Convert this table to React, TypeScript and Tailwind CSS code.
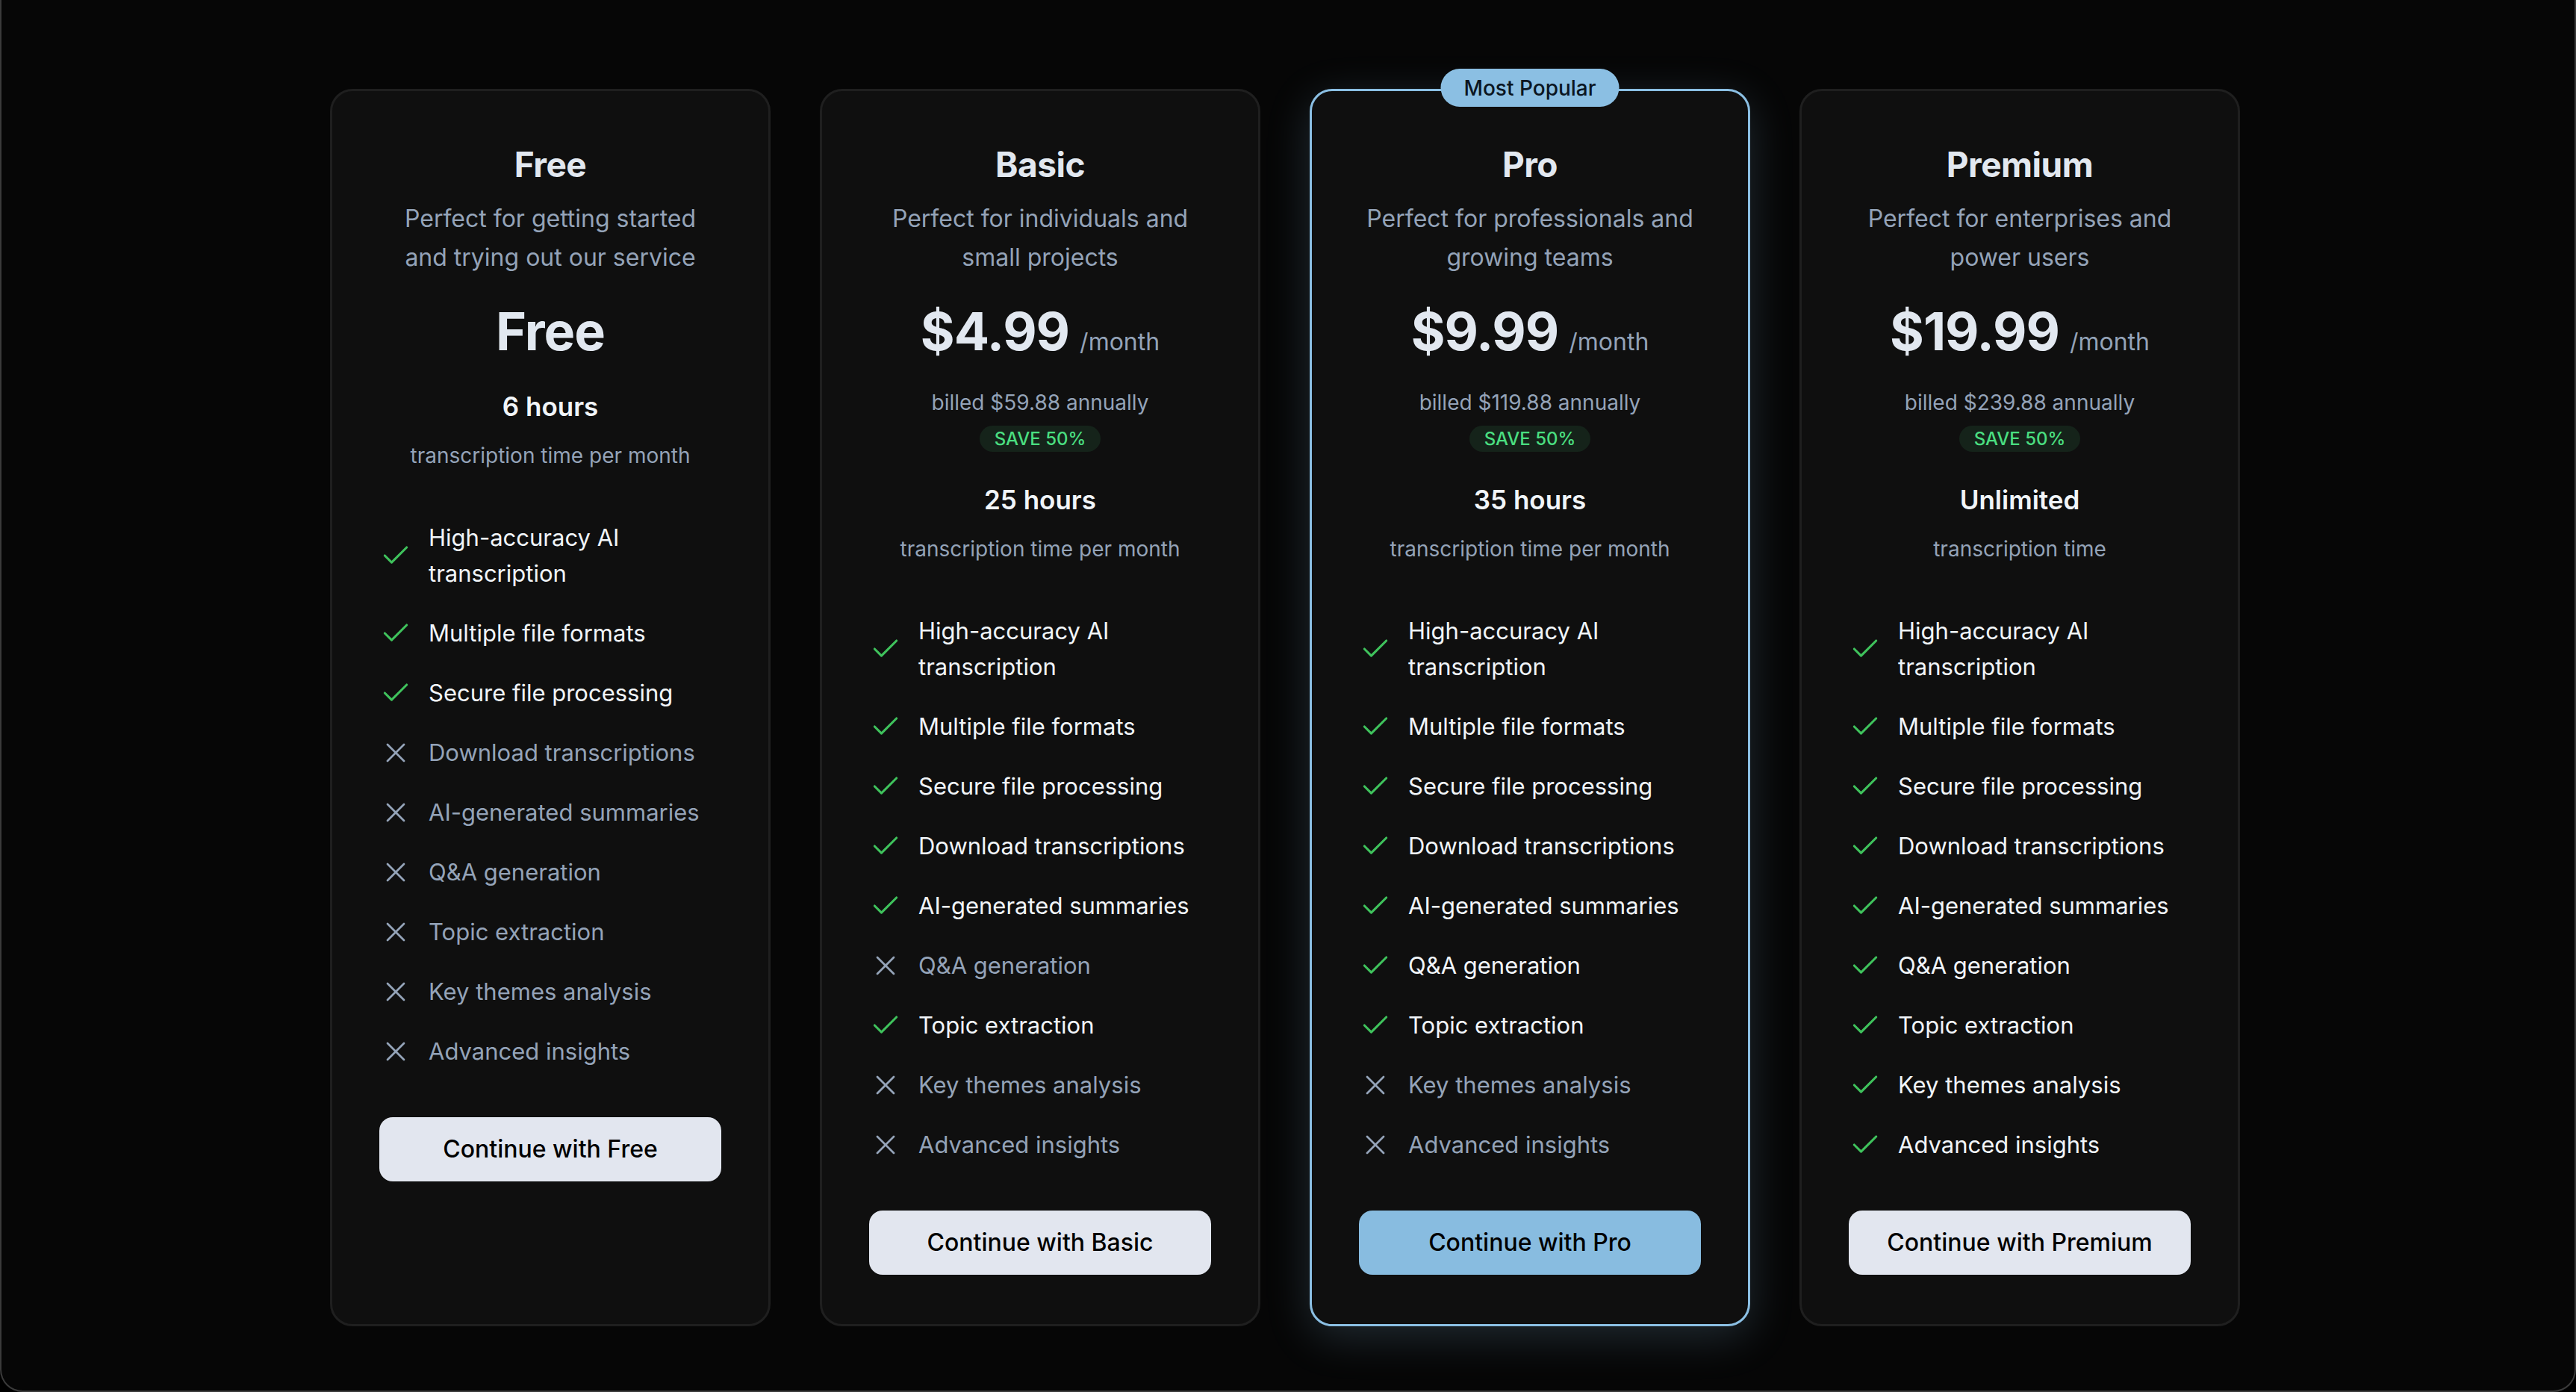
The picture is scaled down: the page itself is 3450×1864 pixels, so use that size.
import { Check, X } from 'lucide-react';

type Plan = {
  name: string;
  blurb: string;
  price: string;
  billed?: string;
  hours: string;
  hoursNote: string;
  popular?: boolean;
};

const features = [
  'High-accuracy AI transcription',
  'Multiple file formats',
  'Secure file processing',
  'Download transcriptions',
  'AI-generated summaries',
  'Q&A generation',
  'Topic extraction',
  'Key themes analysis',
  'Advanced insights',
];

// which features each plan has, in list order
const includedMap: Record<string, boolean[]> = {
  Free: [true, true, true, false, false, false, false, false, false],
  Basic: [true, true, true, true, true, false, true, false, false],
  Pro: [true, true, true, true, true, true, true, false, false],
  Premium: [true, true, true, true, true, true, true, true, true],
};

const plans: Plan[] = [
  { name: 'Free', blurb: 'Perfect for getting started and trying out our service', price: 'Free', hours: '6 hours', hoursNote: 'transcription time per month' },
  { name: 'Basic', blurb: 'Perfect for individuals and small projects', price: '$4.99', billed: 'billed $59.88 annually', hours: '25 hours', hoursNote: 'transcription time per month' },
  { name: 'Pro', blurb: 'Perfect for professionals and growing teams', price: '$9.99', billed: 'billed $119.88 annually', hours: '35 hours', hoursNote: 'transcription time per month', popular: true },
  { name: 'Premium', blurb: 'Perfect for enterprises and power users', price: '$19.99', billed: 'billed $239.88 annually', hours: 'Unlimited', hoursNote: 'transcription time' },
];

const PlanCard = ({ plan }: { plan: Plan }) => {
  const flags = includedMap[plan.name];
  return (
    <div
      className={
        plan.popular
          ? 'relative w-[590px] rounded-[30px] border-[3px] border-[#8bbfe3] bg-[#0f0f0f] px-[63px] pt-[70px] pb-[66px] shadow-[0_14px_60px_rgba(139,191,227,0.2)]'
          : 'relative w-[590px] rounded-[30px] border-[3px] border-[#1f1f1f] bg-[#0f0f0f] px-[63px] pt-[70px] pb-[66px]'
      }
    >
      {plan.popular && (
        <div className='absolute left-1/2 top-[-30px] flex h-[51px] w-[239px] -translate-x-1/2 items-center justify-center rounded-full bg-[#8bbfe3] text-[28px] font-medium text-[#0b1622]'>
          Most Popular
        </div>
      )}
      <div className='flex flex-col items-center text-center'>
        <h3 className='text-[46px] font-bold leading-[56px] tracking-[-0.5px] text-[#e2e8f0]'>{plan.name}</h3>
        <p className='mt-[19px] w-[442px] text-[32px] leading-[52px] text-[#94a3b8]'>{plan.blurb}</p>
        <div className='mt-[33px] flex items-baseline gap-[14px]'>
          <span className='text-[70px] font-bold leading-[80px] tracking-[-1px] text-[#e2e8f0]'>{plan.price}</span>
          {plan.billed && <span className='text-[32px] text-[#94a3b8]'>/month</span>}
        </div>
        {plan.billed && (
          <>
            <p className='mt-[35px] text-[28px] leading-[40px] text-[#94a3b8]'>{plan.billed}</p>
            <span className='mt-[11px] flex h-[35px] items-center rounded-full bg-[#15231a] px-[20px] text-[24px] font-medium text-[#4ade80]'>
              SAVE 50%
            </span>
          </>
        )}
        <p className={plan.billed ? 'mt-[41px] text-[35px] font-semibold leading-[46px] text-[#f1f5f9]' : 'mt-[37px] text-[35px] font-semibold leading-[46px] text-[#f1f5f9]'}>{plan.hours}</p>
        <p className='mt-[23px] text-[28px] leading-[40px] text-[#94a3b8]'>{plan.hoursNote}</p>
      </div>
      <ul className='mt-[66px] flex flex-col gap-[32px]'>
        {features.map((f, i) => (
          <li key={f} className='flex items-center gap-[22px]'>
            {flags[i] ? (
              <Check className='h-[44px] w-[44px] shrink-0 text-[#3fc25c]' strokeWidth={1.7} />
            ) : (
              <X className='h-[44px] w-[44px] shrink-0 text-[#94a3b8]' strokeWidth={1.5} />
            )}
            <span className={flags[i] ? 'text-[31px] leading-[48px] text-[#f1f5f9]' : 'text-[31px] leading-[48px] text-[#94a3b8]'}>{f}</span>
          </li>
        ))}
      </ul>
      <button
        className={
          plan.popular
            ? 'mt-[64px] flex h-[86px] w-full items-center justify-center rounded-[18px] bg-[#88bce0] text-[32px] font-medium text-black'
            : 'mt-[64px] flex h-[86px] w-full items-center justify-center rounded-[18px] bg-[#e2e6ef] text-[32px] font-medium text-black'
        }
      >
        Continue with {plan.name}
      </button>
    </div>
  );
};

export default function App() {
  return (
    <div className='min-h-screen bg-black' style={{ fontFamily: 'Inter, "Noto Sans", sans-serif' }}>
      <div className='flex h-[1864px] justify-center rounded-b-[30px] border-x-2 border-b-2 border-[#3a3a3a] bg-[#060606] pt-[119px] pr-[8px]'>
        <div className='flex items-stretch gap-[66px] self-start'>
          {plans.map(p => (
            <PlanCard key={p.name} plan={p} />
          ))}
        </div>
      </div>
    </div>
  );
}
